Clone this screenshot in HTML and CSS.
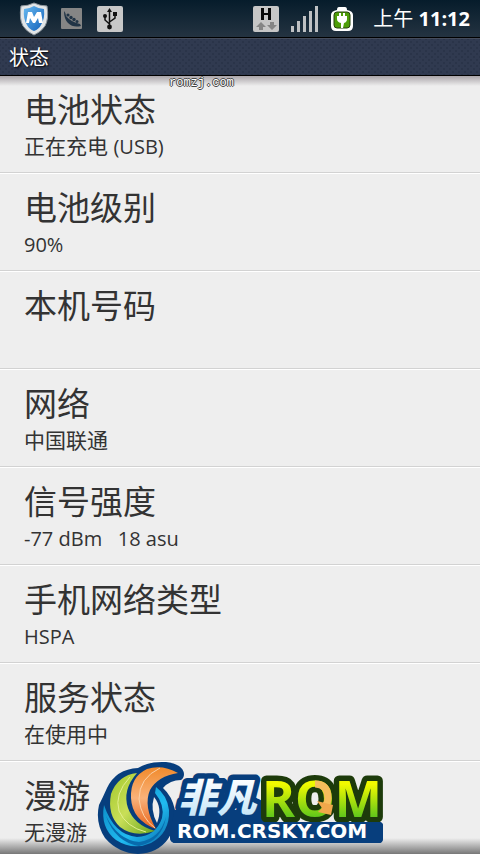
FILE: index.html
```html
<!DOCTYPE html>
<html lang="zh-CN">
<head>
    <meta charset="UTF-8">
    <meta name="viewport" content="width=device-width, initial-scale=1.0">
    <title>状态</title>
    <link rel="stylesheet" href="styles.css">
</head>
<body>
    <div class="screen">
        <header class="status-bar">
            <div class="notifications">
                <svg class="icon-shield" width="30" height="34" viewBox="0 0 30 34">
                    <defs>
                        <linearGradient id="shieldBlue" x1="0" y1="0" x2="1" y2="1">
                            <stop offset="0" stop-color="#68b9f0"/>
                            <stop offset="1" stop-color="#1261ba"/>
                        </linearGradient>
                    </defs>
                    <path d="M15 1 Q21 4 28 4 Q30 17 26 24 Q22 30 15 33 Q8 30 4 24 Q0 17 2 4 Q9 4 15 1Z" fill="#e2e5e7" stroke="#8d969d" stroke-width="1"/>
                    <path d="M15 4 Q20 7 25 7 Q26 17 22 23 Q20 27 15 29 Q10 27 8 23 Q4 17 5 7 Q10 7 15 4Z" fill="url(#shieldBlue)"/>
                    <path d="M7 21 L9 10 H13 L15 15 L18 10 H22 L24 21 H20 L19 16 L16 21 H14 L11 16 L10 21Z" fill="#fff"/>
                </svg>
                <svg class="icon-pod" width="21" height="21" viewBox="0 0 21 21">
                    <rect width="21" height="21" rx="1" fill="#858585"/>
                    <path d="M3 3 Q5 5 5 8 Q10 14 19 16 L20 18 Q12 20 7 15 Q3 11 3 3Z" fill="#213446"/>
                    <g fill="#213446">
                        <circle cx="7" cy="7" r="1.6"/>
                        <circle cx="10" cy="9.5" r="1.7"/>
                        <circle cx="13" cy="11.5" r="1.7"/>
                        <circle cx="16" cy="13.5" r="1.5"/>
                    </g>
                </svg>
                <svg class="icon-usb" width="26" height="26" viewBox="0 0 26 26">
                    <rect width="26" height="26" rx="2" fill="#c8c8c8"/>
                    <g fill="none" stroke="#111" stroke-width="1.5">
                        <path d="M12.5 21V5M12.5 18L8 14V10M12.5 16L18 12V8"/>
                    </g>
                    <path d="M12.5 2L15 6H10Z" fill="#111"/>
                    <circle cx="12.5" cy="21" r="2.4" fill="#111"/>
                    <circle cx="8" cy="10" r="2" fill="#111"/>
                    <rect x="16" y="6" width="4" height="4" fill="#111"/>
                </svg>
            </div>
            <div class="system">
                <svg class="icon-data" width="26" height="26" viewBox="0 0 26 26">
                    <rect width="26" height="26" rx="2" fill="#c6c6c6"/>
                    <path d="M8 2H11V7H15V2H18V14H15V9H11V14H8Z" fill="#080808"/>
                    <path d="M8 16L13 21H10V24H6V21H3Z" fill="#858585"/>
                    <path d="M17 16H21V19H24L19 24L14 19H17Z" fill="#858585"/>
                </svg>
                <svg class="icon-signal" width="28" height="26" viewBox="0 0 28 26">
                    <g fill="#bfc1c3">
                        <rect x="0" y="20" width="3" height="6"/>
                        <rect x="6" y="15" width="3" height="11"/>
                        <rect x="12" y="10" width="3" height="16"/>
                        <rect x="18" y="5" width="3" height="21"/>
                        <rect x="24" y="0" width="3" height="26"/>
                    </g>
                </svg>
                <svg class="icon-battery" width="22" height="24" viewBox="0 0 22 24">
                    <path d="M6 3Q6 0 8 0H14Q16 0 16 3Q22 4 22 8V19Q22 24 17 24H5Q0 24 0 19V8Q0 4 6 3Z" fill="#fff"/>
                    <rect x="3" y="5" width="16" height="16" rx="3" fill="#4e9e08" stroke="#27420e"/>
                    <path d="M8 6H10V9H12V6H14V9H16V12Q16 15 13 16L12 21H10V16Q6 15 6 12V9H8Z" fill="#fff"/>
                </svg>
                <time class="clock">上午 <b>11:12</b></time>
            </div>
        </header>
        <h1 class="title-bar">状态</h1>
        <main class="content">
            <span class="watermark">romzj.com</span>
            <ul class="status-list">
                <li class="item">
                    <h2>电池状态</h2>
                    <p>正在充电 <span class="latin">(USB)</span></p>
                </li>
                <li class="item">
                    <h2>电池级别</h2>
                    <p><span class="latin">90%</span></p>
                </li>
                <li class="item">
                    <h2>本机号码</h2>
                    <p></p>
                </li>
                <li class="item">
                    <h2>网络</h2>
                    <p>中国联通</p>
                </li>
                <li class="item">
                    <h2>信号强度</h2>
                    <p><span class="latin">-77 dBm&nbsp;&nbsp; 18 asu</span></p>
                </li>
                <li class="item">
                    <h2>手机网络类型</h2>
                    <p><span class="latin">HSPA</span></p>
                </li>
                <li class="item">
                    <h2>服务状态</h2>
                    <p>在使用中</p>
                </li>
                <li class="item">
                    <h2>漫游</h2>
                    <p>无漫游</p>
                </li>
            </ul>
        </main>
        <svg class="logo" width="292" height="94" viewBox="0 0 292 94">
            <defs>
                <linearGradient id="orange" x1="0" y1="0" x2="0" y2="1">
                    <stop offset="0" stop-color="#f18a2b"/>
                    <stop offset="0.5" stop-color="#f9b27a"/>
                    <stop offset="1" stop-color="#e8641b"/>
                </linearGradient>
                <linearGradient id="lime" x1="0" y1="0" x2="1" y2="1">
                    <stop offset="0" stop-color="#a2c82c"/>
                    <stop offset="0.5" stop-color="#c9df58"/>
                    <stop offset="1" stop-color="#68a51c"/>
                </linearGradient>
                <linearGradient id="cyan" x1="0" y1="0" x2="1" y2="1">
                    <stop offset="0" stop-color="#0783bd"/>
                    <stop offset="0.6" stop-color="#20baf0"/>
                    <stop offset="1" stop-color="#0868a8"/>
                </linearGradient>
                <linearGradient id="romGreen" x1="0" y1="0" x2="0" y2="1">
                    <stop offset="0.3" stop-color="#f0fa00"/>
                    <stop offset="0.8" stop-color="#5ac41c"/>
                </linearGradient>
                <linearGradient id="ice" x1="0" y1="0" x2="0" y2="1">
                    <stop offset="0.2" stop-color="#ffffff"/>
                    <stop offset="0.9" stop-color="#c3e5f8"/>
                </linearGradient>
            </defs>

            <!-- emblem -->
            <path d="M88 14Q87 4 70 2Q53 1 42 8Q20 9 11 28Q7 37 3 45Q-1 63 9 78Q22 93 42 94Q62 93 72 79Q81 66 79 50Q76 36 67 28Q74 20 85 20Q88 18 88 14Z" fill="#073e7d"/>
            <path d="M8 45Q4 68 20 80Q37 91 55 83Q74 73 73 50Q71 35 60 27L59 33Q69 45 66 58Q60 76 41 77Q18 75 8 45Z" fill="url(#cyan)"/>
            <path d="M10 56Q22 80 43 82Q64 79 70 57Q66 81 43 86Q19 82 10 56Z" fill="#086bad"/>
            <path d="M41 13Q22 15 15 34Q11 55 24 67Q38 78 59 71Q38 65 32 48Q26 30 41 13Z" fill="url(#lime)"/>
            <path d="M34 17Q18 34 23 51Q30 67 50 72" fill="none" stroke="#e2ef8f"/>
            <path d="M82 13Q66 4 51 9Q34 17 35 38Q36 60 60 69Q47 46 54 30Q62 16 82 13Z" fill="url(#orange)"/>
            <path d="M64 8Q43 18 43 39Q45 58 59 68" fill="none" stroke="#fbd1a6"/>
            <path d="M58 37Q67 48 61 63Q54 50 58 37Z" fill="#eee"/>

            <!-- lettering -->
            <path d="M78 50H168V62H283Q287 62 287 66V78Q287 83 283 83H80Q74 83 74 77Z" fill="#073e7d"/>
            <text class="logo-cn" x="82" y="52">非凡</text>
            <text class="logo-rom" x="166" y="57">ROM</text>
            <path d="M219 24Q232 24 232 38Q232 43 229 46" fill="none" stroke="#f6bd5c" stroke-width="7"/>
            <path d="M221 41L237 45L235 55L222 52L226 48Z" fill="#f1a84b"/>
            <path d="M74 62H283Q287 62 287 66V78Q287 83 283 83H80Q74 83 74 77Z" fill="#073e7d"/>
            <text class="logo-url" x="81" y="78">ROM.CRSKY.COM</text>
        </svg>
    </div>
</body>
</html>
```

FILE: styles.css
```css
body {
    margin: 0;
    background: #eee;
    color: #333;
    font-family: "Open Sans", "Noto Sans CJK SC", sans-serif;
}
.screen {
    position: relative;
    display: flex;
    flex-direction: column;
    height: 100vh;
    overflow: hidden;
}

/* status bar */
.status-bar {
    display: flex;
    justify-content: space-between;
    align-items: center;
    flex: none;
    height: 37px;
    padding: 0 10px 0 19px;
    background: linear-gradient(#061c2b, #243341);
    border-bottom: 1px solid #000;
}
.notifications {
    display: flex;
    align-items: center;
    gap: 12px;
}
.icon-usb {
    margin-left: 3px;
}
.system {
    display: flex;
    align-items: center;
    gap: 12px;
}
.icon-battery {
    margin-right: 8px;
}
.clock {
    color: #fff;
    font-size: 20px;
    line-height: 36px;
}

/* title */
.title-bar {
    flex: none;
    box-sizing: border-box;
    height: 38px;
    margin: 0;
    padding: 0 9px;
    border-top: 1px solid #454c5c;
    border-bottom: 1px solid #000;
    background-color: #303a50;
    background-image: radial-gradient(#2a3449 1px, transparent 1px), radial-gradient(#2a3449 1px, transparent 1px);
    background-size: 6px 6px;
    background-position: 0 0, 3px 3px;
    color: #fff;
    font-size: 20px;
    font-weight: normal;
    line-height: 38px;
    text-shadow: 1px 1px 2px #000;
}

/* list */
.content {
    position: relative;
    flex: 1;
    min-height: 0;
    overflow: hidden;
}
.content::before,
.content::after {
    content: "";
    position: absolute;
    left: 0;
    right: 0;
    top: 0;
    height: 10px;
    background: linear-gradient(#aaa5a9, rgba(238, 238, 238, 0));
}
.content::after {
    top: auto;
    bottom: 0;
    height: 16px;
    background: linear-gradient(rgba(238, 238, 238, 0), #777);
}
.watermark {
    position: absolute;
    top: 0;
    left: 169px;
    color: #fff;
    font-family: "Liberation Mono", monospace;
    font-size: 12px;
    line-height: 14px;
    text-shadow: 1px 0 #444, -1px 0 #444, 0 1px #444, 0 -1px #444;
}
.status-list {
    margin: 0;
    padding: 0;
    list-style: none;
}
.item {
    box-sizing: border-box;
    height: 97px;
    padding: 12px 24px 0;
    border-bottom: 1px solid #d2d2d2;
    box-shadow: 0 1px #fff;
    margin-bottom: 1px;
}
.item h2 {
    margin: 0;
    font-size: 33px;
    font-weight: normal;
    line-height: 44px;
}
.item p {
    margin: 0;
    font-size: 21px;
    line-height: 28px;
}
.latin {
    font-size: 20px;
    line-height: 20px;
}

/* logo */
.logo {
    position: absolute;
    left: 96px;
    bottom: 0;
}
.logo-cn {
    font-family: "Noto Sans CJK SC", sans-serif;
    font-size: 39px;
    font-style: italic;
    font-weight: 900;
    fill: url(#ice);
    stroke: #073e7d;
    stroke-width: 11px;
    stroke-linejoin: round;
    paint-order: stroke;
}
.logo-rom {
    font-size: 50px;
    font-weight: bold;
    fill: url(#romGreen);
    stroke: #1d3b0b;
    stroke-width: 11px;
    stroke-linejoin: round;
    paint-order: stroke;
}
.logo-url {
    font-family: "DejaVu Sans", sans-serif;
    font-size: 20px;
    font-weight: bold;
    fill: #fff;
}
```
